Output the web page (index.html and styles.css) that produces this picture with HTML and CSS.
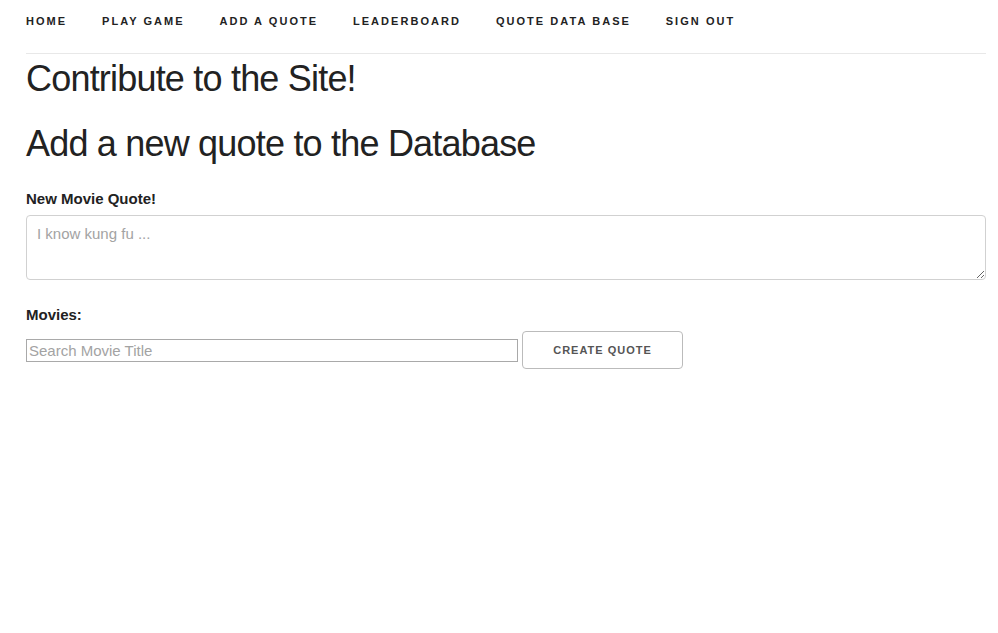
FILE: index.html
```html
<!DOCTYPE html>
<html lang="en">
<head>
<meta charset="utf-8">
<title>Add a Quote</title>
<link rel="stylesheet" href="styles.css">
</head>
<body>
<div class="page">
  <nav class="navbar">
    <ul class="nav-list">
      <li><a class="nav-link" href="#">Home</a></li>
      <li><a class="nav-link" href="#">Play Game</a></li>
      <li><a class="nav-link" href="#">Add a Quote</a></li>
      <li><a class="nav-link" href="#">Leaderboard</a></li>
      <li><a class="nav-link" href="#">Quote Data Base</a></li>
      <li><a class="nav-link" href="#">Sign Out</a></li>
    </ul>
  </nav>
  <main class="content">
    <h2 class="title title-first">Contribute to the Site!</h2>
    <h2 class="title title-second">Add a new quote to the Database</h2>
    <form class="quote-form">
      <label class="field-label" for="quote">New Movie Quote!</label>
      <textarea id="quote" class="quote-text" placeholder="I know kung fu ..."></textarea>
      <label class="field-label field-label-movies" for="movie">Movies:</label>
      <div class="search-row">
        <input id="movie" class="movie-search" type="text" placeholder="Search Movie Title">
        <button class="create-btn" type="submit">Create Quote</button>
      </div>
    </form>
  </main>
</div>
</body>
</html>
```

FILE: styles.css
```css
* {
  box-sizing: border-box;
}

html, body {
  margin: 0;
  padding: 0;
  background: #fff;
}

body {
  font-family: "Liberation Sans", Arial, Helvetica, sans-serif;
  color: #222;
}

.page {
  padding: 0 12px 0 26px;
}

.navbar {
  padding: 11px 0 22px;
  border-bottom: 1px solid #e8e8e8;
}

.nav-list {
  list-style: none;
  margin: 0;
  padding: 0;
  display: flex;
}

.nav-list li {
  margin-right: 34.8px;
}

.nav-link {
  display: block;
  font-size: 11px;
  line-height: 20px;
  font-weight: 700;
  letter-spacing: 2.05px;
  text-transform: uppercase;
  text-decoration: none;
  color: #222;
}

.content {
  padding-top: 2px;
}

.title {
  margin: 0;
  font-size: 36px;
  line-height: 45px;
  font-weight: 400;
  letter-spacing: -0.8px;
  color: #222;
}

.title-second {
  margin-top: 20px;
}

.quote-form {
  display: flex;
  flex-direction: column;
  margin-top: 23px;
}

.field-label {
  font-size: 15px;
  line-height: 20px;
  font-weight: 700;
  color: #222;
}

.quote-text {
  margin-top: 6px;
  width: 100%;
  height: 65px;
  min-height: 65px;
  padding: 6px 10px;
  border: 1px solid #d1d1d1;
  border-radius: 4px;
  font-family: "Liberation Sans", Arial, Helvetica, sans-serif;
  font-size: 15px;
  line-height: 24px;
  color: #222;
  background: #fff;
  outline: none;
}

.quote-text::placeholder,
.movie-search::placeholder {
  color: #a3a3a3;
  opacity: 1;
}

.field-label-movies {
  margin-top: 25px;
}

.search-row {
  margin-top: 6px;
  display: flex;
  align-items: center;
  gap: 4px;
}

.movie-search {
  width: 492px;
  height: 23px;
  padding: 0 2px;
  border: 1px solid #a9a9a9;
  border-radius: 0;
  font-family: "Liberation Sans", Arial, Helvetica, sans-serif;
  font-size: 15px;
  color: #222;
  background: #fff;
  outline: none;
}

.create-btn {
  height: 38px;
  width: 161px;
  padding: 0 30px;
  border: 1px solid #bbb;
  border-radius: 4px;
  background: transparent;
  color: #555;
  font-family: "Liberation Sans", Arial, Helvetica, sans-serif;
  font-size: 11px;
  font-weight: 700;
  letter-spacing: 1px;
  text-transform: uppercase;
  line-height: 36px;
  white-space: nowrap;
  cursor: pointer;
}
```
